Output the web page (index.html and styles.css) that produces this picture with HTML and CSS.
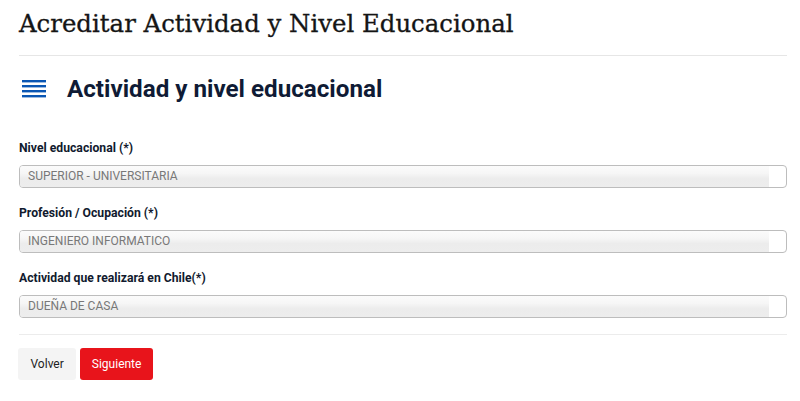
FILE: index.html
```html
<!DOCTYPE html>
<html lang="es">
<head>
    <meta charset="UTF-8">
    <meta name="viewport" content="width=device-width, initial-scale=1.0">
    <title>Acreditar Actividad y Nivel Educacional</title>
    <link rel="stylesheet" href="styles.css">
</head>
<body>
    <div class="page">
        <h1 class="page-title">Acreditar Actividad y Nivel Educacional</h1>
        <hr class="divider">

        <div class="section-head">
            <svg class="section-icon" width="24" height="18" viewBox="0 0 24 18">
                <rect x="0" y="0" width="24" height="2.4" fill="#0a56b3"/>
                <rect x="0" y="5" width="24" height="2.4" fill="#0a56b3"/>
                <rect x="0" y="10" width="24" height="2.4" fill="#0a56b3"/>
                <rect x="0" y="15" width="24" height="2.4" fill="#0a56b3"/>
            </svg>
            <h2 class="section-title">Actividad y nivel educacional</h2>
        </div>

        <div class="field">
            <label class="field-label">Nivel educacional (*)</label>
            <div class="field-box"><span class="field-value">SUPERIOR - UNIVERSITARIA</span></div>
        </div>
        <div class="field">
            <label class="field-label">Profesión / Ocupación (*)</label>
            <div class="field-box"><span class="field-value">INGENIERO INFORMATICO</span></div>
        </div>
        <div class="field">
            <label class="field-label">Actividad que realizará en Chile(*)</label>
            <div class="field-box"><span class="field-value">DUEÑA DE CASA</span></div>
        </div>

        <hr class="divider divider-bottom">

        <div class="actions">
            <button class="btn btn-back">Volver</button>
            <button class="btn btn-next">Siguiente</button>
        </div>
    </div>
</body>
</html>
```

FILE: styles.css
```css
body {
    margin: 0;
    font-family: Roboto, "Liberation Sans", sans-serif;
    background-color: #fff;
    color: #111a2e;
}
.page {
    width: 768px;
    margin-left: 19px;
}
.page-title {
    font-family: "DejaVu Serif", serif;
    font-weight: normal;
    font-size: 24.4px;
    line-height: 34px;
    margin: 7px 0 0 0;
    color: #151515;
    -webkit-text-stroke: 0.3px #151515;
}
.divider {
    border: none;
    border-top: 1px solid #e6e6e6;
    margin: 14px 0 0 0;
}
.section-head {
    display: flex;
    align-items: center;
    gap: 21px;
    margin-top: 18px;
    padding-left: 3px;
}
.section-title {
    font-size: 24.2px;
    font-weight: bold;
    margin: 0;
    line-height: 30px;
    color: #0f1b35;
}
.field {
    margin-top: 16px;
}
.section-head + .field {
    margin-top: 35px;
}
.field-label {
    display: block;
    font-size: 12.2px;
    font-weight: bold;
    line-height: 18px;
    margin-bottom: 8px;
}
.field-box {
    height: 23px;
    border: 1px solid #bdbdbd;
    border-radius: 4px;
    padding-right: 17px;
    box-sizing: border-box;
    background-color: #fff;
    overflow: hidden;
}
.field-value {
    display: block;
    height: 100%;
    padding-left: 8px;
    font-size: 12px;
    line-height: 21px;
    color: #787878;
    background: linear-gradient(#fbfbfb 0%, #f6f6f6 35%, #ececec 60%, #ededed 100%);
}
.divider-bottom {
    margin-top: 16px;
    border-top-color: #ececec;
}
.actions {
    display: flex;
    gap: 4px;
    margin-top: 13px;
}
.btn {
    font-family: Roboto, "Liberation Sans", sans-serif;
    font-size: 12px;
    height: 32px;
    padding: 0 11.5px;
    border: none;
    border-radius: 3px;
    cursor: pointer;
}
.btn-back {
    margin-left: -1px;
    padding: 0 12.5px;
    background-color: #f4f4f4;
    color: #222;
}
.btn-next {
    background-color: #e8141b;
    color: #fff;
}
```
